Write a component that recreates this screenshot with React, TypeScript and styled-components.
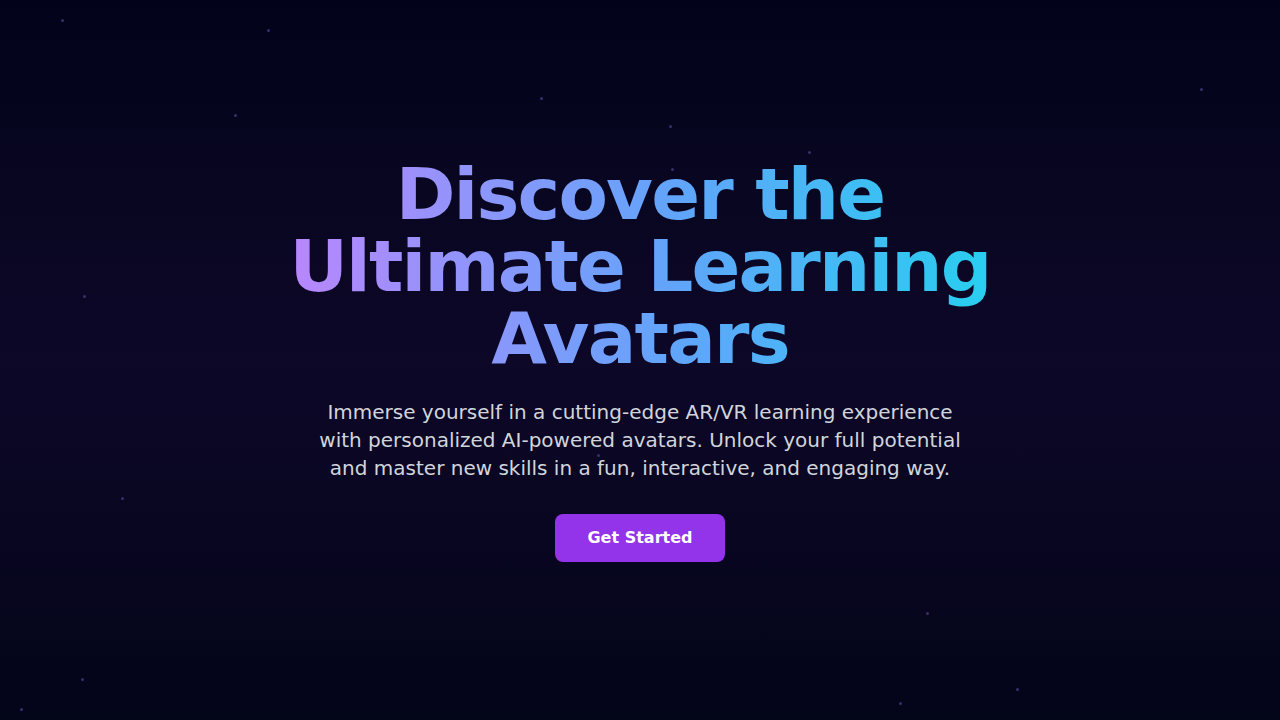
import React from "react";
import styled, { createGlobalStyle } from "styled-components";

const GlobalStyle = createGlobalStyle`
  html, body { margin: 0; padding: 0; }
  body {
    font-family: "DejaVu Sans", "Liberation Sans", sans-serif;
    background: #03041a;
  }
  * { box-sizing: border-box; }
`;

const Page = styled.main`
  position: relative;
  min-height: 100vh;
  display: flex;
  align-items: center;
  justify-content: center;
  overflow: hidden;
  background: linear-gradient(
    to bottom,
    #02031a 0%,
    #080620 25%,
    #0d0728 50%,
    #080620 75%,
    #030519 100%
  );
`;

const Star = styled.span`
  position: absolute;
  width: 3px;
  height: 3px;
  border-radius: 50%;
  background: #3a2f6c;
`;

const Hero = styled.section`
  position: relative;
  display: flex;
  flex-direction: column;
  align-items: center;
  text-align: center;
`;

const Title = styled.h1`
  margin: 0 0 24px;
  width: 768px;
  font-size: 72px;
  line-height: 72px;
  font-weight: 700;
  letter-spacing: -0.025em;
  background: linear-gradient(to right, #c084fc, #60a5fa 55%, #22d3ee);
  -webkit-background-clip: text;
  background-clip: text;
  color: transparent;
`;

const Lead = styled.p`
  margin: 0 0 32px;
  max-width: 672px;
  font-size: 20px;
  line-height: 28px;
  color: #d1d5db;
`;

const CTA = styled.button`
  border: none;
  cursor: pointer;
  font-family: inherit;
  font-size: 16px;
  font-weight: 700;
  line-height: 24px;
  padding: 12px 32px;
  border-radius: 8px;
  background: #9333ea;
  color: #ffffff;
`;

const stars: [number, number][] = [
  [62, 20], [268, 30], [235, 115], [541, 98], [670, 126], [672, 169],
  [809, 152], [1201, 89], [84, 296], [122, 498], [598, 455], [927, 613],
  [82, 679], [21, 709], [900, 703], [1017, 689],
];

export default function App() {
  return (
    <>
      <GlobalStyle />
      <Page>
        {stars.map(([x, y], i) => (
          <Star key={i} style={{ left: x - 1, top: y - 1 }} />
        ))}
        <Hero>
          <Title>Discover the Ultimate Learning Avatars</Title>
          <Lead>
            Immerse yourself in a cutting-edge AR/VR learning experience with
            personalized AI-powered avatars. Unlock your full potential and
            master new skills in a fun, interactive, and engaging way.
          </Lead>
          <CTA>Get Started</CTA>
        </Hero>
      </Page>
    </>
  );
}
